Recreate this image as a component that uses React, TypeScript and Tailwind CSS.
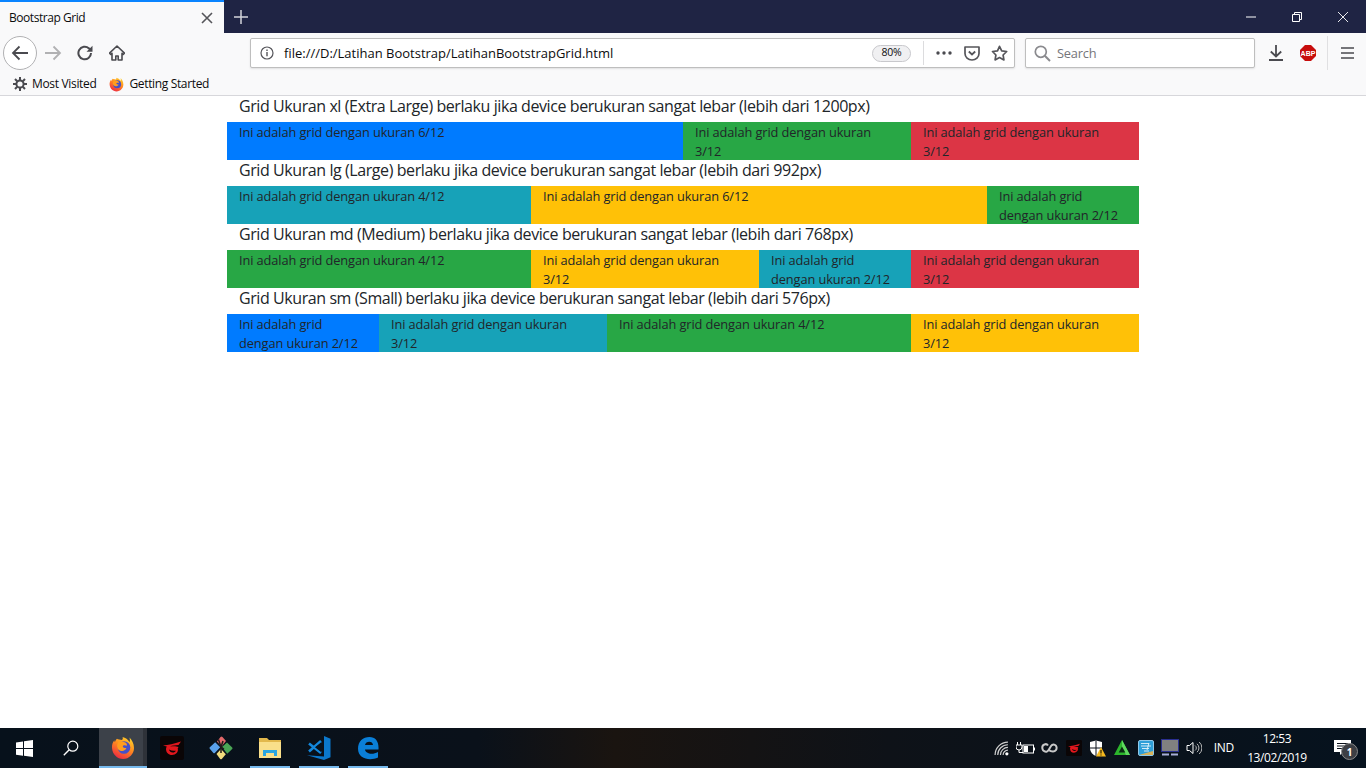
import React from "react";

const FF = { fontFamily: '"Open Sans","Noto Sans",sans-serif' };

function Cell({ w, c, t }: { w: string; c: string; t: string }) {
  return <div className={`${w} ${c} h-[38px] px-3 pt-px text-[12.8px] leading-[19px] tracking-[-0.1px] text-[#212529]`}>{t}</div>;
}

function H({ t }: { t: string }) {
  return <h5 className="h-[26px] px-3 text-[16px] leading-[20px] tracking-[-0.42px] font-normal">{t}</h5>;
}

const T = "Ini adalah grid dengan ukuran ";

function FirefoxIcon({ s, id }: { s: number; id: string }) {
  return (
    <svg width={s} height={s} viewBox="0 0 24 24">
      <defs>
        <linearGradient id={id} x1="0.8" y1="0" x2="0.25" y2="1">
          <stop offset="0" stopColor="#ffd52b" />
          <stop offset="0.45" stopColor="#ff8a1f" />
          <stop offset="1" stopColor="#ec2545" />
        </linearGradient>
      </defs>
      <path d="M6 2.800C4.800 4 4.200 5 4 6.300 3.500 5.800 3.300 5 3.300 4.300 1.600 6.300.8 9 1 12c.4 6.300 5.300 11 11 11 6.200 0 11-5 11-11 0-4.500-2.200-8-4.500-10.500.6 2 .5 3.500 0 4.800C17 3.500 14.500 1.500 11.500 1c.5 1 .5 2-.5 3C9 3.500 7 3.500 6 2.800z" fill={`url(#${id})`} />
      <circle cx="13" cy="11.500" r="6.300" fill="#4550c8" />
      <path d="M8.500 4.500c2 1.500 5.500 1 7 3 .6.900.5 1.800.2 2.300-1.400-.8-3.700-.7-3.900.6-.1 1.200 2 1.300 3.600 1.700-.6 1.900-2.800 3.200-5.100 2.800-2.900-.5-4.600-3-4.100-5.700.3-1.800 1-3.300 2.300-4.700z" fill="#ff9d1e" />
    </svg>
  );
}

function Garena({ s }: { s: number }) {
  return (
    <svg width={s} height={s} viewBox="0 0 24 24">
      <rect width="24" height="24" rx="2" fill="#0a0506" />
      <path d="M3 9.500C8 9 14 8 21 5.500l-2.500 3.600c-3 .1-6 .5-8.500 1.400 3-.6 6.500-.5 8.500.5l-.8 1.500c1.200 3-2 6.500-5.700 6.500-3.500 0-6-2.500-6-6 0-1 .3-1.800.8-2.500L3 9.500zm6 4c.4 1.800 2 3 3.800 3 1.400 0 2.600-.7 3-1.800-2.400.4-4.800 0-6.800-1.200z" fill="#e2171d" />
    </svg>
  );
}

function Tray({ children }: { children: React.ReactNode }) {
  return <div className="w-[24px] flex justify-center items-center">{children}</div>;
}

function TaskApp({ children, on }: { children: React.ReactNode; on?: boolean }) {
  return (
    <div className={`relative ${on ? "w-[48px] bg-[#3c4149]" : "w-[49px]"} h-full flex items-center justify-center`}>
      {children}
      {on && <div className="absolute right-0 top-0 bottom-0 w-[4px] bg-[#2e3239]" />}
      {on !== undefined && <div className={`absolute bottom-0 ${on ? "left-0 right-0" : "left-[5px] right-[4px]"} h-[2px] bg-[#76b9ed]`} />}
    </div>
  );
}

export default function App() {
  return (
    <div className="h-screen w-full overflow-hidden flex flex-col bg-white" style={FF}>
      {/* tab strip */}
      <div className="h-[33px] bg-[#1f2444] flex shrink-0">
        <div className="w-[224px] bg-[#f9f9fa] border-t-2 border-[#0a84ff] flex items-center pl-[9px] pr-[11px]">
          <span className="text-[12px] tracking-[-0.45px] text-[#0c0c0d] leading-none mt-[1px]">Bootstrap Grid</span>
          <svg className="ml-auto" width="12" height="12" viewBox="0 0 12 12"><path d="M1 1l10 10M11 1L1 11" stroke="#55555a" strokeWidth="1.600" /></svg>
        </div>
        <div className="w-[34px] flex items-center justify-center">
          <svg width="14" height="14" viewBox="0 0 14 14"><path d="M7 0v14M0 7h14" stroke="#d3d4da" strokeWidth="1.500" /></svg>
        </div>
        <div className="ml-auto flex items-center">
          <div className="w-[46px] flex justify-center"><svg width="10" height="10" viewBox="0 0 10 10"><path d="M0 5h10" stroke="#fff" /></svg></div>
          <div className="w-[46px] flex justify-center"><svg width="10" height="10" viewBox="0 0 10 10"><path d="M.5 2.500h7v7h-7zM2.500 2.500v-2h7v7h-2" fill="none" stroke="#fff" /></svg></div>
          <div className="w-[46px] flex justify-center"><svg width="10" height="10" viewBox="0 0 10 10"><path d="M0 0l10 10M10 0L0 10" stroke="#fff" strokeWidth=".9" /></svg></div>
        </div>
      </div>

      {/* nav */}
      <div className="h-[40px] bg-[#f9f9fa] flex items-center shrink-0 relative">
        <div className="w-[250px] flex items-center pl-[3px] shrink-0">
          <div className="w-[34px] h-[34px] rounded-full border border-[#b1b1b3] bg-white flex items-center justify-center">
            <svg width="18" height="16" viewBox="0 0 18 16"><path d="M17 8H2M8.500 1.500L2 8l6.500 6.500" fill="none" stroke="#4a4a4f" strokeWidth="1.800" /></svg>
          </div>
          <div className="w-[32px] flex justify-center">
            <svg width="18" height="16" viewBox="0 0 18 16"><path d="M1 8h15M9.500 1.500L16 8l-6.500 6.500" fill="none" stroke="#b1b1b3" strokeWidth="1.800" /></svg>
          </div>
          <div className="w-[32px] flex justify-center">
            <svg width="16" height="16" viewBox="0 0 16 16"><path d="M14 8a6.300 6.300 0 1 1-2-4.600L14.500 5" fill="none" stroke="#4a4a4f" strokeWidth="2" /><path d="M15.500.8v6h-6z" fill="#4a4a4f" /></svg>
          </div>
          <div className="w-[32px] flex justify-center">
            <svg width="16" height="16" viewBox="0 0 16 16"><path d="M8 1L.5 8.200 1.800 9.500 3 8.400V15h3.800v-4h2.400v4H13V8.400l1.200 1.100 1.300-1.300z" fill="none" stroke="#4a4a4f" strokeWidth="1.600" strokeLinejoin="round" /></svg>
          </div>
        </div>
        <div className="w-[765px] h-[30px] bg-white border border-[#bebebe] rounded-[2px] shadow-[0_1px_2px_rgba(0,0,0,0.1)] flex items-center shrink-0">
          <svg className="ml-[9px]" width="14" height="14" viewBox="0 0 14 14"><circle cx="7" cy="7" r="6" fill="none" stroke="#55555a" strokeWidth="1.200" /><path d="M7 6v4.200M7 3.400v1.500" stroke="#55555a" strokeWidth="1.400" /></svg>
          <span className="ml-[10px] text-[13px] tracking-[0px] text-[#0c0c0d] leading-none">file:///D:/Latihan Bootstrap/LatihanBootstrapGrid.html</span>
          <div className="ml-auto w-[39px] h-[17px] mr-[12px] rounded-full bg-[#f0f0f2] border border-[#c8c8cc] flex items-center justify-center text-[10.500px] tracking-[-0.2px] text-[#0c0c0d]">80%</div>
          <div className="w-px h-[24px] bg-[#dcdcde]" />
          <svg className="ml-[12px]" width="16" height="4" viewBox="0 0 16 4"><circle cx="2" cy="2" r="1.700" fill="#4a4a4f" /><circle cx="8" cy="2" r="1.700" fill="#4a4a4f" /><circle cx="14" cy="2" r="1.700" fill="#4a4a4f" /></svg>
          <svg className="ml-[12px]" width="16" height="15" viewBox="0 0 16 15"><path d="M1 1h14v6.500a7 6.500 0 0 1-14 0z" fill="none" stroke="#55555a" strokeWidth="1.700" strokeLinejoin="round" /><path d="M4.800 5.500L8 8.500l3.200-3" fill="none" stroke="#55555a" strokeWidth="1.800" /></svg>
          <svg className="ml-[11px] mr-[6px]" width="17" height="16" viewBox="0 0 17 16"><path d="M8.500 1.300l2.200 4.500 5 .7-3.600 3.500.8 4.900-4.400-2.300-4.400 2.300.8-4.900L1.500 6.500l5-.7z" fill="none" stroke="#55555a" strokeWidth="1.700" strokeLinejoin="round" /></svg>
        </div>
        <div className="ml-[10px] w-[230px] h-[30px] bg-white border border-[#bebebe] rounded-[2px] shadow-[0_1px_2px_rgba(0,0,0,0.1)] flex items-center shrink-0">
          <svg className="ml-[8px]" width="17" height="17" viewBox="0 0 17 17"><circle cx="6.800" cy="6.800" r="5.500" fill="none" stroke="#8a8a8e" strokeWidth="1.700" /><path d="M10.800 10.800l5.200 5.200" stroke="#8a8a8e" strokeWidth="2" /></svg>
          <span className="ml-[6px] text-[12.800px] tracking-[-0.2px] text-[#75757a] leading-none">Search</span>
        </div>
        <div className="ml-[13px] w-[16px] flex justify-center shrink-0">
          <svg width="14" height="16" viewBox="0 0 14 16"><path d="M7 0v11M1.800 6.500L7 11.500l5.200-5M0 15h14" fill="none" stroke="#4a4a4f" strokeWidth="1.800" /></svg>
        </div>
        <div className="ml-[16px] shrink-0">
          <svg width="16" height="16" viewBox="0 0 16 16"><path d="M5 0h6l5 5v6l-5 5H5l-5-5V5z" fill="#c70d0c" /><text x="8" y="10.600" textAnchor="middle" fontSize="7" fontWeight="700" fill="#fff" fontFamily="Liberation Sans">ABP</text></svg>
        </div>
        <div className="ml-[11px] w-px h-[34px] bg-[#e0e0e2] shrink-0" />
        <div className="ml-[13px] shrink-0">
          <svg width="13" height="12" viewBox="0 0 13 12"><path d="M0 1h13M0 6h13M0 11h13" stroke="#4a4a4f" strokeWidth="1.700" /></svg>
        </div>
      </div>

      {/* bookmarks */}
      <div className="h-[23px] bg-[#f9f9fa] border-b border-[#d7d7db] flex items-center pl-[13px] shrink-0">
        <svg width="14" height="14" viewBox="0 0 14 14"><circle cx="7" cy="7" r="3.600" fill="none" stroke="#4a4a4f" strokeWidth="2" /><path d="M7 0v3M7 11v3M0 7h3M11 7h3M2 2l2.200 2.200M9.800 9.800L12 12M12 2L9.800 4.200M4.200 9.800L2 12" stroke="#4a4a4f" strokeWidth="2" /></svg>
        <span className="ml-[5px] text-[12px] tracking-[-0.33px] text-[#0c0c0d] leading-none">Most Visited</span>
        <span className="ml-[13px] flex"><FirefoxIcon s={15} id="ffa" /></span>
        <span className="ml-[5px] text-[12px] tracking-[-0.35px] text-[#0c0c0d] leading-none">Getting Started</span>
      </div>

      {/* page */}
      <div className="flex-1 min-h-0">
        <div className="w-[912px] ml-[227px] text-[#212529]">
          <H t="Grid Ukuran xl (Extra Large) berlaku jika device berukuran sangat lebar (lebih dari 1200px)" />
          <div className="flex">
            <Cell w="w-[456px]" c="bg-[#007bff]" t={T + "6/12"} />
            <Cell w="w-[228px]" c="bg-[#28a745]" t={T + "3/12"} />
            <Cell w="w-[228px]" c="bg-[#dc3545]" t={T + "3/12"} />
          </div>
          <H t="Grid Ukuran lg (Large) berlaku jika device berukuran sangat lebar (lebih dari 992px)" />
          <div className="flex">
            <Cell w="w-[304px]" c="bg-[#17a2b8]" t={T + "4/12"} />
            <Cell w="w-[456px]" c="bg-[#ffc107]" t={T + "6/12"} />
            <Cell w="w-[152px]" c="bg-[#28a745]" t={T + "2/12"} />
          </div>
          <H t="Grid Ukuran md (Medium) berlaku jika device berukuran sangat lebar (lebih dari 768px)" />
          <div className="flex">
            <Cell w="w-[304px]" c="bg-[#28a745]" t={T + "4/12"} />
            <Cell w="w-[228px]" c="bg-[#ffc107]" t={T + "3/12"} />
            <Cell w="w-[152px]" c="bg-[#17a2b8]" t={T + "2/12"} />
            <Cell w="w-[228px]" c="bg-[#dc3545]" t={T + "3/12"} />
          </div>
          <H t="Grid Ukuran sm (Small) berlaku jika device berukuran sangat lebar (lebih dari 576px)" />
          <div className="flex">
            <Cell w="w-[152px]" c="bg-[#007bff]" t={T + "2/12"} />
            <Cell w="w-[228px]" c="bg-[#17a2b8]" t={T + "3/12"} />
            <Cell w="w-[304px]" c="bg-[#28a745]" t={T + "4/12"} />
            <Cell w="w-[228px]" c="bg-[#ffc107]" t={T + "3/12"} />
          </div>
        </div>
      </div>

      {/* taskbar */}
      <div className="h-[40px] shrink-0 flex items-center text-white bg-[linear-gradient(90deg,#07111b_0%,#0a111a_35%,#1a1410_45%,#0e1218_65%,#06121e_100%)]">
        <div className="w-[48px] h-full flex items-center justify-center">
          <svg width="17" height="17" viewBox="0 0 17 17"><path d="M0 2.400l7-1v6.700H0zM8 1.300L17 0v8.100H8zM0 9h7v6.700l-7-1zM8 9h9v8l-9-1.300z" fill="#fff" /></svg>
        </div>
        <div className="w-[51px] h-full flex items-center justify-center pr-[5px]">
          <svg width="16" height="16" viewBox="0 0 16 16"><circle cx="9.800" cy="6.200" r="5" fill="none" stroke="#fff" strokeWidth="1.200" /><path d="M6.200 9.800L.8 15.200" stroke="#fff" strokeWidth="1.400" /></svg>
        </div>
        <TaskApp on><div className="pr-[1px] flex"><FirefoxIcon s={24} id="ffb" /></div></TaskApp>
        <TaskApp><Garena s={24} /></TaskApp>
        <TaskApp>
          <svg width="24" height="24" viewBox="0 0 24 24">
            <path d="M8 5.500l3.500-4.500q1-.8 2 0l3.500 4-4.500 5.500z" fill="#e2686a" />
            <path d="M.8 11.200l5.400-5 5 5-5.400 5.800q-.7.500-1.400 0L.8 12.800q-.7-.8 0-1.600z" fill="#5aa0ea" />
            <path d="M13 11l5-4.500 5.200 5q.7.800 0 1.500l-5 4.800z" fill="#4aa555" />
            <path d="M7.500 18l4.500-5 4.800 5.200-4 4.800q-.8.600-1.600 0z" fill="#f2dc7e" />
            <path d="M9.500 3.500L12 11v6M14 5l-2 6 3 2" stroke="#211a1a" strokeWidth="1.500" fill="none" />
          </svg>
        </TaskApp>
        <TaskApp on={false}>
          <svg width="22" height="20" viewBox="0 0 22 20"><path d="M0 0h8l2 2h12v3H0z" fill="#e2b84c" /><rect y="4" width="22" height="16" fill="#f9df8a" /><path d="M4 18v-6h14v6h-3v-3H7v3z" fill="#2ba6e0" /></svg>
        </TaskApp>
        <TaskApp on={false}>
          <svg width="24" height="24" viewBox="0 0 24 24">
            <path d="M2 7.500l12 9.500M2 15.500L14 5" stroke="#1388dc" strokeWidth="2.600" fill="none" />
            <path d="M8 11.200l6-4.700v9.500z" fill="#07111b" />
            <path d="M17 0l6.500 2.700v18.600L17 24 0 19.200l17 1.300z" fill="#0b78cc" />
          </svg>
        </TaskApp>
        <TaskApp on={false}>
          <svg width="22" height="24" viewBox="0 0 22 24"><path d="M1 13C1 5 6 1 12.500 1c6 0 9.500 4.500 9 12.500H8c.5 4 7 6 13 2.500v5.500c-7.500 3.500-20 2-20-9zM8 9h8c0-4.500-7.500-4.500-8 0z" fill="#0a7fd8" /></svg>
        </TaskApp>

        <div className="ml-auto flex items-center h-full">
          <div className="flex items-center">
            <Tray><svg width="15" height="15" viewBox="0 0 14 14"><path d="M1 13A12 12 0 0 1 13 1M3.500 13A9.500 9.500 0 0 1 13 3.500M6 13a7 7 0 0 1 7-7M8.500 13A4.500 4.500 0 0 1 13 8.500" fill="none" stroke="#d0d0d0" strokeWidth="1.100" /><circle cx="12" cy="12" r="1.500" fill="#fff" /></svg></Tray>
            <Tray><svg width="19" height="13" viewBox="0 0 19 13"><path d="M1.500 0v3M4.500 0v3M0 3h6v2a3 3 0 0 1-6 0zM3 8v2.500h4" stroke="#fff" fill="none" /><rect x="7" y="3" width="10.500" height="8" fill="none" stroke="#fff" /><rect x="8" y="4" width="4" height="6" fill="#fff" /><rect x="18" y="5.500" width="1" height="3" fill="#fff" /></svg></Tray>
            <Tray><svg width="17" height="12" viewBox="0 0 17 12"><path d="M7 3.500C6 2 4.500 2 3.500 2.500 1.500 3.200 1 5 1.500 7c.5 2 2.500 3 4.500 2.500 2-.6 3-5 5-6.500 2-1 4-.2 4.500 2 .5 2.500-1 4.500-3.500 4.500-1.500 0-3-.5-4-1.500" fill="none" stroke="#c8c8c8" strokeWidth="2" /></svg></Tray>
            <Tray><Garena s={16} /></Tray>
            <Tray><svg width="17" height="17" viewBox="0 0 17 17"><path d="M1 2l6-1.500L13 2v6c0 4-3 7-6 8-3-1-6-4-6-8z" fill="#fff" /><path d="M7 .5V16M1 8h12" stroke="#0a111a" /><path d="M12 7l5 9.500H7z" fill="#f3b81f" /><path d="M12 10v3.500M12 14.500v1" stroke="#000" /></svg></Tray>
            <Tray><svg width="16" height="16" viewBox="0 0 16 16"><path d="M8 0L16 15H0z" fill="#2cb52c" /><path d="M8 0L16 15h-4L8 7z" fill="#5fd85f" /><path d="M8 6.500l3.300 6h-6.600z" fill="#0a2a12" /></svg></Tray>
            <Tray>
              <svg width="16" height="16" viewBox="0 0 16 16">
                <rect x=".5" y=".5" width="15" height="15" rx="1.500" fill="#2f9fd8" stroke="#8fc8e8" />
                <path d="M1 15L15 15 15 11z" fill="#d8b25a" />
                <path d="M3 3.500h8M3 6h10M4 8.500h7M6 11h5M11 3l-2 7" stroke="#e4f4fb" strokeWidth=".9" fill="none" />
              </svg>
            </Tray>
            <Tray>
              <svg width="18" height="18" viewBox="0 0 18 18">
                <rect x=".5" y=".5" width="17" height="12" fill="#808080" stroke="#2a2f90" />
                <path d="M1 15.500h7M10 15.500h7" stroke="#a8aed8" strokeWidth="2" />
              </svg>
            </Tray>
            <Tray><svg width="16" height="14" viewBox="0 0 16 14"><path d="M1 4.500h2.500L7 1.500v11l-3.500-3H1z" fill="none" stroke="#fff" /><path d="M9 4.500a3 3 0 0 1 0 5M11 2.800a5.500 5.500 0 0 1 0 8.400M13.200 1a8 8 0 0 1 0 12" fill="none" stroke="#b8b8b8" /></svg></Tray>
          </div>
          <span className="ml-[8px] text-[12px] tracking-[-0.3px]">IND</span>
          <div className="ml-[7px] w-[72px] flex flex-col items-center text-[12px] tracking-[-0.4px] leading-[19px] mr-[13px]">
            <span>12:53</span>
            <span>13/02/2019</span>
          </div>
          <div className="relative w-[40px] h-full flex items-center justify-start pl-[8px]">
            <svg width="17" height="16" viewBox="0 0 17 16"><path d="M0 0h17v12H9l-3 3v-3H0z" fill="#fff" /><path d="M3 3.500h11M3 6h11M3 8.500h8" stroke="#0a111a" /></svg>
            <div className="absolute left-[15px] top-[15px] w-[17px] h-[17px] rounded-full bg-[#3d3f44] border border-[#8a8a8a] flex items-center justify-center text-[10px] font-bold leading-none">1</div>
          </div>
        </div>
      </div>
    </div>
  );
}
